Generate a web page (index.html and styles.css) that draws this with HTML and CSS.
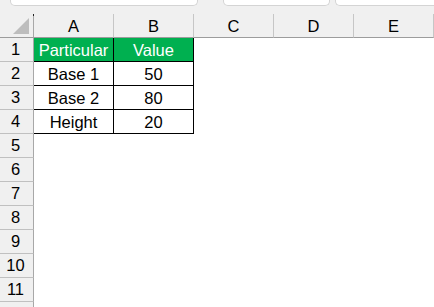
FILE: index.html
```html
<!DOCTYPE html>
<html lang="en">
<head>
  <meta charset="UTF-8">
  <title>Sheet</title>
  <link rel="stylesheet" href="styles.css">
</head>
<body>
  <div class="topbar">
    <div class="box box-name"></div>
    <div class="box box-mid"></div>
    <div class="box box-right"></div>
  </div>
  <div class="sheet">
    <div class="corner">
      <svg width="17" height="16" viewBox="0 0 17 16"><polygon points="0,16 16,16 16,0" fill="#bdbdbd"/></svg>
    </div>
    <div class="colhead">A</div>
    <div class="colhead">B</div>
    <div class="colhead">C</div>
    <div class="colhead">D</div>
    <div class="colhead">E</div>

    <div class="rowhead">1</div>
    <div class="cell head">Particular</div>
    <div class="cell head">Value</div>
    <div class="cell empty"></div><div class="cell empty"></div><div class="cell empty"></div>

    <div class="rowhead">2</div>
    <div class="cell data">Base 1</div>
    <div class="cell data">50</div>
    <div class="cell empty"></div><div class="cell empty"></div><div class="cell empty"></div>

    <div class="rowhead">3</div>
    <div class="cell data">Base 2</div>
    <div class="cell data">80</div>
    <div class="cell empty"></div><div class="cell empty"></div><div class="cell empty"></div>

    <div class="rowhead">4</div>
    <div class="cell data">Height</div>
    <div class="cell data">20</div>
    <div class="cell empty"></div><div class="cell empty"></div><div class="cell empty"></div>

    <div class="rowhead">5</div><div class="blank"></div>
    <div class="rowhead">6</div><div class="blank"></div>
    <div class="rowhead">7</div><div class="blank"></div>
    <div class="rowhead">8</div><div class="blank"></div>
    <div class="rowhead">9</div><div class="blank"></div>
    <div class="rowhead">10</div><div class="blank"></div>
    <div class="rowhead">11</div><div class="blank"></div>
    <div class="rowhead"></div><div class="blank"></div>
  </div>
</body>
</html>
```

FILE: styles.css
```css
*{
    margin: 0;
    padding: 0;
    box-sizing: border-box;
}

body {
    width: 434px;
    height: 307px;
    overflow: hidden;
    background: #ffffff;
    font-family: "Liberation Sans", Arial, sans-serif;
    font-size: 16.5px;
    color: #000000;
}

.topbar{
    height: 14px;
    background: #f0f0f0;
    display: flex;
    align-items: flex-start;
}

.box{
    height: 6px;
    background: #ffffff;
    border: 1px solid #d4d4d4;
    border-top: none;
    border-radius: 0 0 5px 5px;
}

.box-name{
    margin-left: 10px;
    width: 188px;
}

.box-mid{
    margin-left: 25px;
    width: 107px;
}

.box-right{
    margin-left: 5px;
    flex: 1;
    border-right: none;
    border-radius: 0 0 0 5px;
}

.sheet{
    display: grid;
    grid-template-columns: 34px repeat(5, 80px);
    grid-auto-rows: 24px;
}

.corner{
    background: #f0f0f0;
    border-right: 1px solid #a8a8a8;
    border-bottom: 1px solid #9c9c9c;
    display: flex;
    align-items: flex-end;
    justify-content: flex-end;
    padding: 0 3px 3px 0;
    position: relative;
}

.corner::before{
    content: "";
    position: absolute;
    right: -1px;
    top: 0;
    width: 1px;
    height: 2px;
    background: #222222;
}

.colhead{
    background: #f0f0f0;
    border-right: 1px solid #c6c6c6;
    border-bottom: 1px solid #9c9c9c;
    display: flex;
    align-items: center;
    justify-content: center;
    padding-top: 1px;
}

.rowhead{
    background: #f0f0f0;
    border-right: 1px solid #a8a8a8;
    border-bottom: 1px solid #c0c0c0;
    display: flex;
    align-items: center;
    justify-content: center;
    padding-right: 2px;
}

.cell{
    display: flex;
    align-items: center;
    justify-content: center;
    padding-top: 1px;
}

.head{
    background: #00b050;
    color: #ffffff;
    border-right: 1px solid #000000;
    border-bottom: 1px solid #000000;
}

.data{
    border-right: 1px solid #000000;
    border-bottom: 1px solid #000000;
}

.blank{
    grid-column: 2 / 7;
}
```
